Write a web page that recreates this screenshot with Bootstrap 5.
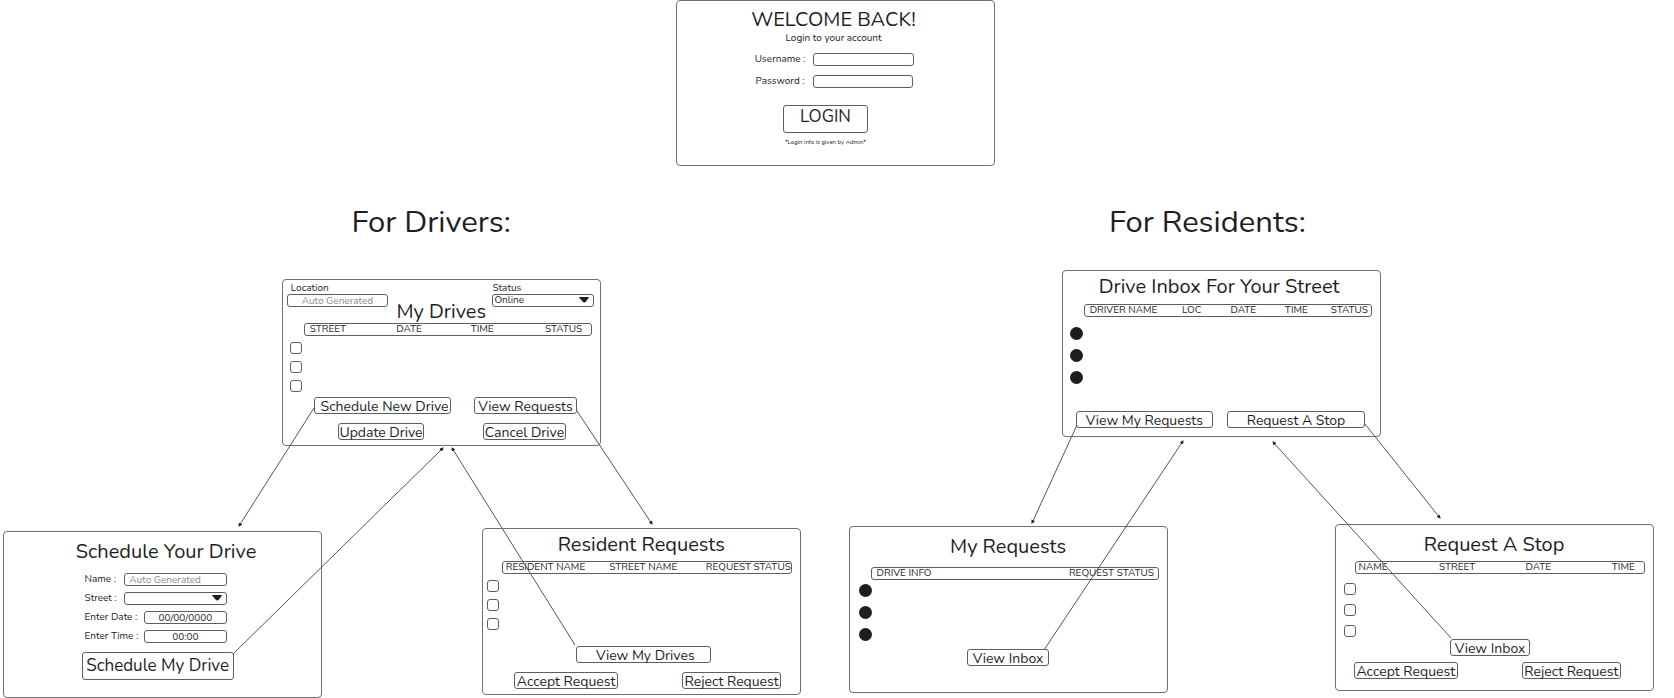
<!DOCTYPE html>
<html lang="en">
<head>
<meta charset="utf-8">
<meta name="viewport" content="width=device-width, initial-scale=1">
<title>Drive scheduling wireframes</title>
<link rel="stylesheet" href="https://cdn.jsdelivr.net/npm/bootstrap@5.3.0/dist/css/bootstrap.min.css">
<style>
  :root { --ink: #1e1e1e; --edge: #5e5e5e; }
  body { font-family: Nunito, Lato, "Open Sans", sans-serif; font-size: 10px; line-height: 12px; color: var(--ink); background: #fff; }
  .board { min-height: 698px; overflow: hidden; }

  /* Screens are nodes on the board */
  .screen { position: absolute; width: 19.06%; min-height: 167px; border: 1px solid #707070; border-radius: 4px; display: flex; flex-direction: column; }
  .at-login { left: 40.38%; top: 0; min-height: 166px; padding-top: 7px; }
  .at-drives { left: 16.83%; top: 279px; }
  .at-inbox { left: 63.42%; top: 270px; }
  .at-schedule { left: 0.15%; top: 531px; }
  .at-resident { left: 28.78%; top: 528px; }
  .at-mine { left: 50.69%; top: 526px; }
  .at-stop { left: 79.72%; top: 524px; }
  .group-title { position: absolute; top: 202px; margin: 0; font-size: 31px; line-height: 40px; font-weight: 400; white-space: nowrap; }
  .group-drivers { left: 21%; }
  .group-residents { left: 66.25%; }

  .screen-title { font-size: 20px; line-height: 24px; font-weight: 400; margin: 0; text-align: center; white-space: nowrap; }
  .pt-screen { padding-top: 4px; }
  .pt-low { padding-top: 8px; }
  .drives-title { margin-top: -7px; line-height: 23px; }

  .field { height: 13px; border: 1px solid var(--edge); border-radius: 3px; padding: 0 4px; font-size: 10px; line-height: 11px; color: var(--ink); background: transparent; width: 32%; min-width: 0; appearance: none; }
  .field::placeholder { color: #868e96; opacity: 1; }
  .picker { position: relative; display: flex; }
  .picker .field { width: 100%; padding: 0 1px; }
  .picker svg { position: absolute; right: 5px; top: 3px; pointer-events: none; }
  .status-bar { padding: 2px 6px 0 4px; }
  .side { width: 33%; }

  .key { border: 1px solid var(--edge); border-radius: 3px; padding: 1px 0 0; height: 17px; font-size: 14px; line-height: 15px; color: var(--ink); background: transparent; white-space: nowrap; }
  .key-big { height: 28px; font-size: 17px; line-height: 26px; padding: 0; }
  .key-login { width: 27%; line-height: 20px; padding-bottom: 4px; margin: 17px 20px 0 0; }
  .key-schedule { width: 48%; margin: 9px 0 0 78px; }
  .key-wide { width: 43%; }
  .key-view { width: 26%; }

  .head-box { margin: 5px 8px 0 21px; border: 1px solid var(--edge); border-radius: 3px; height: 13px; }
  .head-box table { width: 100%; table-layout: fixed; border-collapse: collapse; }
  .head-box th { padding: 0; font-weight: 400; font-size: 10px; line-height: 11px; white-space: nowrap; }
  .head-box th:first-child { padding-left: 5px; }
  .head-tight { margin: 4px 8px 0 19px; }
  .head-tight th:first-child { padding-left: 3px; }
  .c14 { width: 14%; } .c16 { width: 16%; } .c17 { width: 17%; } .c19 { width: 19%; } .c26 { width: 26%; } .c29 { width: 29%; }
  .c30 { width: 30%; } .c32 { width: 32%; } .c34 { width: 34%; } .c37 { width: 37%; } .c69 { width: 69%; }

  .picks { display: flex; flex-direction: column; gap: 7px; margin: 6px 0 0 7px; }
  .picks input { appearance: none; width: 12px; height: 12px; margin: 0; border: 1px solid var(--edge); border-radius: 3px; }
  .picks input[type=radio] { width: 13px; height: 13px; border: 0; border-radius: 50%; background: var(--ink); }
  .picks-dots { gap: 9px; margin: 10px 0 0 7px; }
  .picks-near { margin: 4px 0 0 9px; }
  .picks-loose { gap: 9px; margin: 9px 0 0 8px; }

  .actions { margin-top: auto; display: flex; flex-direction: column; gap: 9px; padding-bottom: 5px; }
  .actions-mid { gap: 6px; padding-bottom: 11px; }
  .actions-low { padding-bottom: 26px; }
  .pair { display: grid; }
  .pair-a { grid-template-columns: 137fr 102fr; gap: 23px; padding: 0 23px 0 31px; }
  .pair-b { grid-template-columns: 87fr 83fr; gap: 59px; padding: 0 34px 0 55px; }
  .pair-c { grid-template-columns: 1fr 1fr; gap: 14px; padding: 0 15px 0 13px; }
  .pair-d { grid-template-columns: 104fr 98fr; gap: 64px; padding: 0 19px 0 31px; }
  .pair-e { grid-template-columns: 104fr 98fr; gap: 64px; padding: 0 32px 0 18px; }

  .form-lines { padding: 0 94px 0 81px; }
  .form-lines .line { display: flex; justify-content: space-between; white-space: nowrap; margin-top: 6px; }
  .form-lines .line:first-child { margin-top: 9px; }
  .form-lines .field, .form-lines .picker { width: 72%; }
  .form-lines .picker .field { width: 100%; }
  .form-lines .field-short { width: 58%; }
  .login-line { width: 100%; margin-top: 9px; padding-right: 2px; }
  .fine { font-size: 6px; line-height: 8px; margin: 5px 20px 0 0; }

  .links { position: absolute; left: 0; top: 0; width: 100%; height: 698px; pointer-events: none; }
  .links line { stroke: #555; stroke-width: 1; vector-effect: non-scaling-stroke; }
</style>
</head>
<body>
<main class="board position-relative w-100">

  <section class="screen at-login align-items-center" aria-label="Login">
    <h1 class="screen-title pe-1">WELCOME BACK!</h1>
    <p class="m-0 pe-1">Login to your account</p>
    <div class="login-line d-flex justify-content-center gap-2">
      <label for="user">Username :</label><input id="user" class="field" type="text">
    </div>
    <div class="login-line d-flex justify-content-center gap-2">
      <label for="pass">Password :</label><input id="pass" class="field" type="password">
    </div>
    <button type="button" class="key key-big key-login">LOGIN</button>
    <p class="fine">*Login info is given by Admin*</p>
  </section>

  <h2 class="group-title group-drivers">For Drivers:</h2>
  <h2 class="group-title group-residents">For Residents:</h2>

  <section class="screen at-drives" aria-label="My Drives">
    <div class="status-bar d-flex justify-content-between">
      <div class="side d-flex flex-column"><label for="loc" class="ps-1">Location</label><input id="loc" class="field w-100 text-center" type="text" placeholder="Auto Generated"></div>
      <div class="side d-flex flex-column"><label for="stat">Status</label>
        <span class="picker"><select id="stat" class="field"><option>Online</option></select>
          <svg width="10" height="6" viewBox="0 0 10 6"><path d="M0.5 0.5H9.5L6 5H4.5Z" fill="#1e1e1e" stroke="#1e1e1e"/></svg></span></div>
    </div>
    <h3 class="screen-title drives-title">My Drives</h3>
    <div class="head-box mt-0"><table><thead><tr><th class="c32">STREET</th><th class="c26">DATE</th><th class="c26">TIME</th><th>STATUS</th></tr></thead></table></div>
    <div class="picks"><input type="checkbox" aria-label="Drive 1"><input type="checkbox" aria-label="Drive 2"><input type="checkbox" aria-label="Drive 3"></div>
    <div class="actions">
      <div class="pair pair-a"><button type="button" class="key ps-1">Schedule New Drive</button><button type="button" class="key">View Requests</button></div>
      <div class="pair pair-b"><button type="button" class="key">Update Drive</button><button type="button" class="key">Cancel Drive</button></div>
    </div>
  </section>

  <section class="screen at-inbox pt-screen" aria-label="Drive Inbox">
    <h3 class="screen-title pe-1">Drive Inbox For Your Street</h3>
    <div class="head-box"><table><thead><tr><th class="c34">DRIVER NAME</th><th class="c17">LOC</th><th class="c19">DATE</th><th class="c16">TIME</th><th>STATUS</th></tr></thead></table></div>
    <div class="picks picks-dots"><input type="radio" name="inbox" aria-label="Drive 1"><input type="radio" name="inbox" aria-label="Drive 2"><input type="radio" name="inbox" aria-label="Drive 3"></div>
    <div class="actions pb-2"><div class="pair pair-c"><button type="button" class="key">View My Requests</button><button type="button" class="key">Request A Stop</button></div></div>
  </section>

  <section class="screen at-schedule pt-low" aria-label="Schedule Your Drive">
    <h3 class="screen-title ps-2">Schedule Your Drive</h3>
    <div class="form-lines">
      <div class="line"><label for="name">Name :</label><input id="name" class="field" type="text" placeholder="Auto Generated"></div>
      <div class="line"><label for="street">Street :</label><span class="picker"><select id="street" class="field"><option></option></select>
        <svg width="10" height="6" viewBox="0 0 10 6"><path d="M0.5 0.5H9.5L6 5H4.5Z" fill="#1e1e1e" stroke="#1e1e1e"/></svg></span></div>
      <div class="line"><label for="date">Enter Date :</label><input id="date" class="field field-short text-center" type="text" value="00/00/0000"></div>
      <div class="line"><label for="time">Enter Time :</label><input id="time" class="field field-short text-center" type="text" value="00:00"></div>
    </div>
    <button type="button" class="key key-big key-schedule">Schedule My Drive</button>
  </section>

  <section class="screen at-resident pt-screen" aria-label="Resident Requests">
    <h3 class="screen-title">Resident Requests</h3>
    <div class="head-box head-tight"><table><thead><tr><th class="c37">RESIDENT NAME</th><th class="c30">STREET NAME</th><th class="text-end">REQUEST STATUS</th></tr></thead></table></div>
    <div class="picks ms-1"><input type="checkbox" aria-label="Request 1"><input type="checkbox" aria-label="Request 2"><input type="checkbox" aria-label="Request 3"></div>
    <div class="actions">
      <div class="d-flex justify-content-center ps-1"><button type="button" class="key key-wide ps-1">View My Drives</button></div>
      <div class="pair pair-d"><button type="button" class="key">Accept Request</button><button type="button" class="key">Reject Request</button></div>
    </div>
  </section>

  <section class="screen at-mine pt-low" aria-label="My Requests">
    <h3 class="screen-title">My Requests</h3>
    <div class="head-box mt-2"><table><thead><tr><th class="c69">DRIVE INFO</th><th>REQUEST STATUS</th></tr></thead></table></div>
    <div class="picks picks-dots picks-near"><input type="radio" name="mine" aria-label="Request 1"><input type="radio" name="mine" aria-label="Request 2"><input type="radio" name="mine" aria-label="Request 3"></div>
    <div class="actions actions-low"><button type="button" class="key key-view mx-auto">View Inbox</button></div>
  </section>

  <section class="screen at-stop pt-low" aria-label="Request A Stop">
    <h3 class="screen-title">Request A Stop</h3>
    <div class="head-box head-tight"><table><thead><tr><th class="c29">NAME</th><th class="c30">STREET</th><th class="c30">DATE</th><th>TIME</th></tr></thead></table></div>
    <div class="picks picks-loose"><input type="checkbox" aria-label="Stop 1"><input type="checkbox" aria-label="Stop 2"><input type="checkbox" aria-label="Stop 3"></div>
    <div class="actions actions-mid">
      <div class="d-flex justify-content-center pe-2"><button type="button" class="key key-view">View Inbox</button></div>
      <div class="pair pair-e"><button type="button" class="key">Accept Request</button><button type="button" class="key">Reject Request</button></div>
    </div>
  </section>

  <!-- Navigation arrows between screens -->
  <svg class="links" viewBox="0 0 1674 698" preserveAspectRatio="none" aria-hidden="true">
    <defs><marker id="tip" viewBox="0 0 4 4" refX="3" refY="2" markerWidth="4" markerHeight="4" markerUnits="userSpaceOnUse" orient="auto"><path d="M0 0L4 2L0 4Z" fill="#1e1e1e"/></marker></defs>
    <line x1="314" y1="408" x2="239" y2="526" marker-end="url(#tip)"/>
    <line x1="233" y1="654" x2="443" y2="448" marker-end="url(#tip)"/>
    <line x1="575" y1="645" x2="452" y2="448" marker-end="url(#tip)"/>
    <line x1="577" y1="411" x2="652" y2="524" marker-end="url(#tip)"/>
    <line x1="1077" y1="425" x2="1032" y2="523" marker-end="url(#tip)"/>
    <line x1="1044" y1="650" x2="1183" y2="441" marker-end="url(#tip)"/>
    <line x1="1451" y1="638" x2="1273" y2="442" marker-end="url(#tip)"/>
    <line x1="1365" y1="424" x2="1440" y2="518" marker-end="url(#tip)"/>
  </svg>
</main>
<script src="https://cdn.jsdelivr.net/npm/bootstrap@5.3.0/dist/js/bootstrap.bundle.min.js"></script>
</body>
</html>
